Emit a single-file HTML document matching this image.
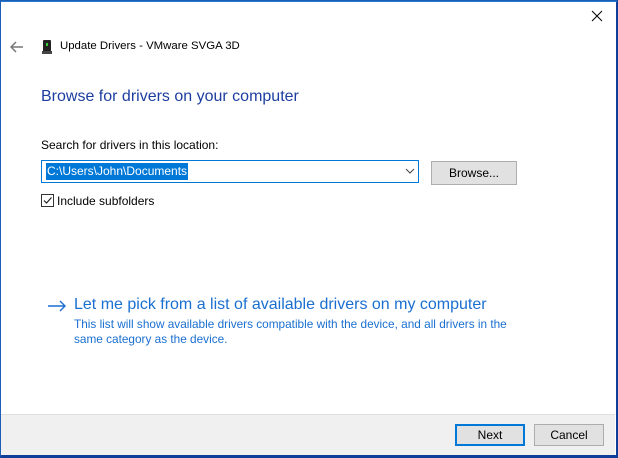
<!DOCTYPE html>
<html><head><meta charset="utf-8"><style>
*{margin:0;padding:0;box-sizing:border-box}
body{width:618px;height:458px;overflow:hidden;background:#fff;font-family:"Liberation Sans",sans-serif;position:relative;font-size:12px;color:#000}
.a{position:absolute;white-space:nowrap}
</style></head><body>
<div class="a" style="left:0;top:0;width:618px;height:458px;border:1px solid #1a5fb4;border-right:2px solid #0f3e9a;border-bottom:3px solid #0f3e9a"></div>
<div class="a" style="left:1px;top:1px;width:616px;height:1px;background:#2b78d0"></div>
<svg class="a" style="left:591px;top:10px" width="12" height="12"><path d="M1 1L11 11M11 1L1 11" stroke="#000" stroke-width="1"/></svg>
<svg class="a" style="left:10px;top:41px" width="14" height="12"><path d="M1 6H13M6 1L1 6L6 11" stroke="#777" stroke-width="1.5" fill="none"/></svg>
<div class="a" style="left:43px;top:40px;width:8px;height:13px;background:#222;border-radius:1px"></div>
<div class="a" style="left:46px;top:43px;width:2px;height:3px;background:#3c3"></div>
<div class="a" style="left:42px;top:51px;width:10px;height:3px;background:#444"></div>
<div class="a" style="left:60px;top:40px;font-size:11.4px">Update Drivers - VMware SVGA 3D</div>
<div class="a" style="left:41px;top:88px;font-size:16px;color:#1d3ea0">Browse for drivers on your computer</div>
<div class="a" style="left:41px;top:138px">Search for drivers in this location:</div>
<div class="a" style="left:41px;top:160px;width:378px;height:23px;border:1px solid #0078d7;background:#fff"></div>
<div class="a" style="left:46px;top:163px;background:#0078d7;color:#fff;padding:1px 1px;line-height:15px">C:\Users\John\Documents</div>
<svg class="a" style="left:405px;top:168px" width="10" height="6"><path d="M1 1L5 5L9 1" stroke="#444" fill="none"/></svg>
<div class="a" style="left:431px;top:161px;width:86px;height:24px;background:#e1e1e1;border:1px solid #adadad;text-align:center;line-height:22px">Browse...</div>
<div class="a" style="left:41px;top:194px;width:13px;height:13px;border:1px solid #333;background:#fff"></div>
<svg class="a" style="left:42px;top:195px" width="11" height="11"><path d="M2 5.5L4.5 8L9.5 2.5" stroke="#222" stroke-width="1.2" fill="none"/></svg>
<div class="a" style="left:57px;top:194px">Include subfolders</div>
<svg class="a" style="left:47px;top:300px" width="20" height="12"><path d="M1 6H18M13 1L18 6L13 11" stroke="#1a6fd0" stroke-width="1.4" fill="none"/></svg>
<div class="a" style="left:74px;top:296px;font-size:16px;color:#1a6fd0">Let me pick from a list of available drivers on my computer</div>
<div class="a" style="left:74px;top:317px;font-size:11.8px;color:#1a6fd0;line-height:15px">This list will show available drivers compatible with the device, and all drivers in the<br>same category as the device.</div>
<div class="a" style="left:1px;top:414px;width:614px;height:41px;background:#f0f0f0;border-top:1px solid #dfdfdf"></div>
<div class="a" style="left:455px;top:424px;width:70px;height:22px;background:#e1e1e1;border:2px solid #0078d7;text-align:center;line-height:18px">Next</div>
<div class="a" style="left:534px;top:424px;width:70px;height:22px;background:#e1e1e1;border:1px solid #adadad;text-align:center;line-height:20px">Cancel</div>
</body></html>
